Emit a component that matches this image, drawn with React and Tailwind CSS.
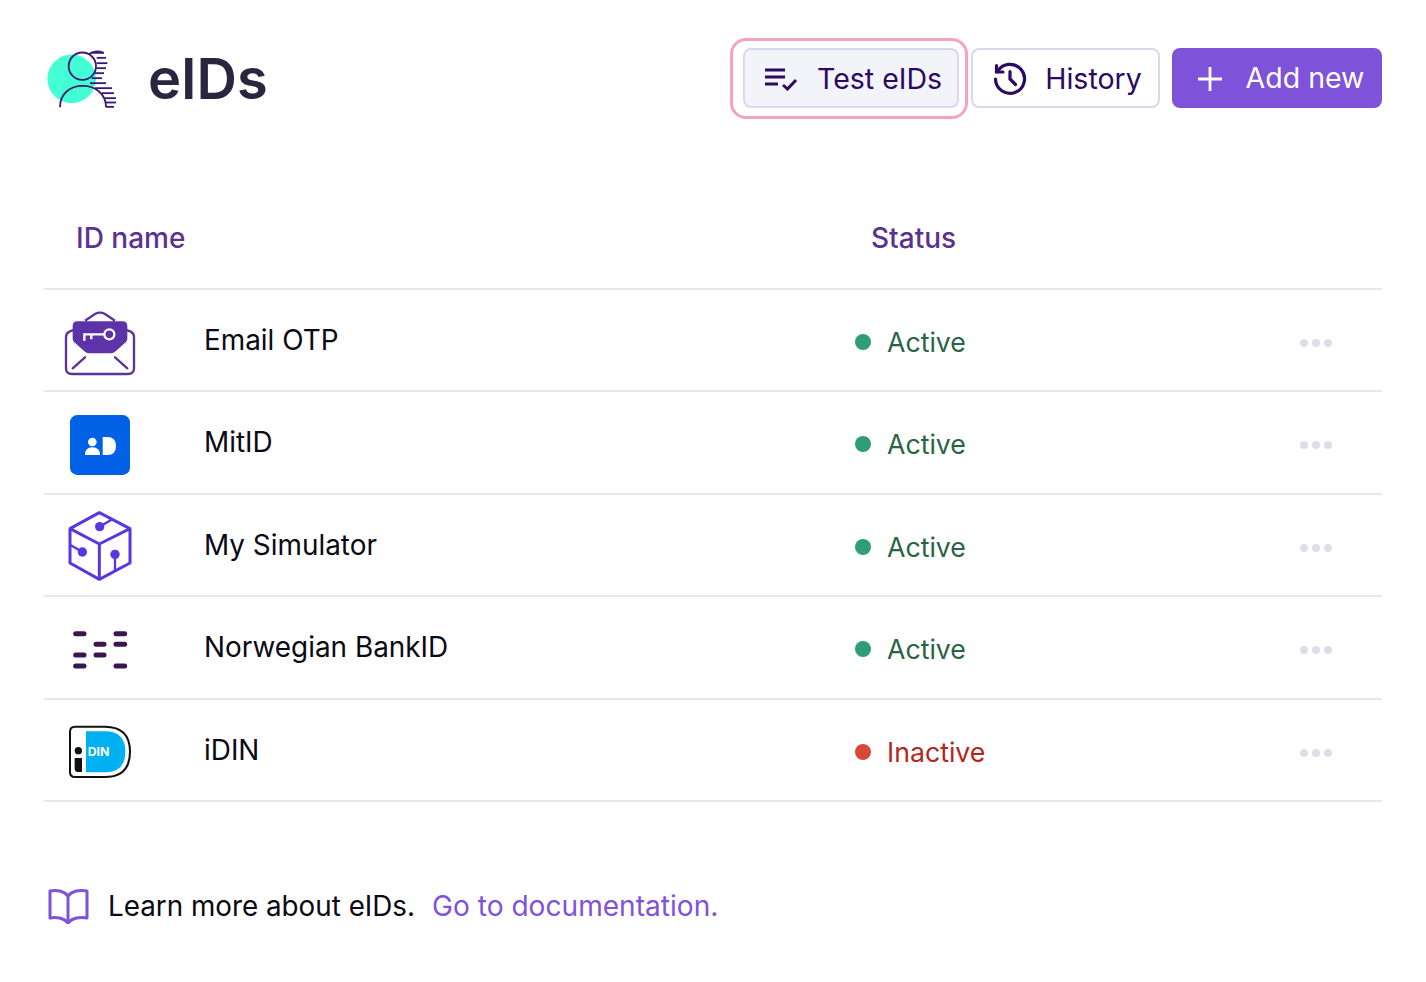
import React from "react";

const F = { fontFamily: "Inter, 'Liberation Sans', sans-serif" };

function Logo() {
  const stripes = [[185,222,67],[200,228,82],[200,232,98],[200,228,113],[195,222,128],[185,216,143],[180,228,158],[195,246,173],[215,252,188],[225,258,203],[228,258,216],[228,252,229]];
  return (
    <svg width="80" height="70" viewBox="42 40.500 240 210" className="shrink-0">
      <circle cx="125" cy="145" r="73" fill="#44ffd4" />
      <circle cx="157" cy="107" r="41" fill="none" stroke="#3b1a75" strokeWidth="5.500" />
      <path d="M90 230C90 190 120 166 158 166C196 166 228 190 228 230" fill="none" stroke="#3b1a75" strokeWidth="5.500" />
      <path d="M176 72C185 62 205 60 220 67" fill="none" stroke="#3b1a75" strokeWidth="5.500" />
      {stripes.map(([a, b, y]) => <path key={y} d={`M${a} ${y}H${b}`} stroke="#3b1a75" strokeWidth="5.500" />)}
    </svg>
  );
}

function EmailIcon() {
  return (
    <svg width="100" height="100" viewBox="0 -30 300 300">
      <path d="M70 90L58 95Q48 100 48 112V205Q48 222 66 222H234Q252 222 252 205V112Q252 100 242 95L230 90" fill="none" stroke="#5c3398" strokeWidth="7" />
      <path d="M105 62L135 42Q150 34 165 42L195 62" fill="none" stroke="#5c3398" strokeWidth="7" />
      <path d="M68 78Q68 64 82 64H218Q232 64 232 78V116Q232 122 227 127L197 154Q191 160 183 160H117Q109 160 103 154L73 127Q68 122 68 116Z" fill="#5c33a8" />
      <circle cx="178" cy="103" r="15" fill="none" stroke="#fff" strokeWidth="7" />
      <path d="M163 103H103V122M124 103V118" fill="none" stroke="#fff" strokeWidth="7" />
      <path d="M68 205L105 172M195 172L232 205" stroke="#5c3398" strokeWidth="7" strokeLinecap="round" />
    </svg>
  );
}

function MitIcon() {
  return (
    <svg width="100" height="102" viewBox="0 -27 300 306">
      <rect x="60" y="345" width="180" height="180" rx="22" fill="#0060e6" transform="translate(0 -300)" />
      <g transform="translate(0 -300)">
        <circle cx="127" cy="426" r="13" fill="#fff" />
        <path d="M105 465Q105 442 127 442Q150 442 150 465Z" fill="#fff" />
        <path d="M158 411H172Q198 411 198 438Q198 465 172 465H158Z" fill="#fff" />
      </g>
    </svg>
  );
}

function DiceIcon() {
  const c = "#5a36e0";
  return (
    <svg width="100" height="102" viewBox="0 -18 300 306">
      <path d="M148 38L240 86V189L148 238L60 189V86Z" fill="none" stroke={c} strokeWidth="9" strokeLinejoin="round" />
      <path d="M60 86L148 132L240 86M148 132V238" fill="none" stroke={c} strokeWidth="9" strokeLinejoin="round" />
      <circle cx="149" cy="80" r="14" fill={c} />
      <path d="M149 80L188 57" stroke={c} strokeWidth="7" />
      <circle cx="97" cy="156" r="14" fill={c} />
      <path d="M97 156L60 134" stroke={c} strokeWidth="7" />
      <circle cx="195" cy="163" r="14" fill={c} />
      <path d="M195 163V210" stroke={c} strokeWidth="7" />
    </svg>
  );
}

function BankIcon() {
  const bars = [[70,109,401],[191,231,401],[131,169,433],[191,231,433],[70,109,465],[131,169,465],[70,109,498],[191,231,498]];
  return (
    <svg width="100" height="102" viewBox="0 288 300 306">
      {bars.map(([a, b, y]) => (
        <path key={`${a}-${y}`} d={`M${a + 7} ${y}H${b - 7}`} stroke="#3a1650" strokeWidth="15" strokeLinecap="round" />
      ))}
    </svg>
  );
}

function IdinIcon() {
  return (
    <svg width="100" height="102" viewBox="0 -33 300 306" style={{ fontFamily: "Inter, sans-serif" }}>
      <path d="M75 50H165Q240 50 240 125Q240 201 165 201H75Q60 201 60 186V65Q60 50 75 50Z" fill="#fff" stroke="#111" strokeWidth="6" />
      <path d="M108 64H165Q226 64 226 125Q226 187 165 187H108Z" fill="#00b0f0" />
      <circle cx="85" cy="122" r="11" fill="#111" />
      <path d="M74 144H96V186H86Q74 186 74 176Z" fill="#111" />
      <text x="113" y="138" fill="#fff" fontSize="37" fontWeight="700">DIN</text>
    </svg>
  );
}

function Dots() {
  return (
    <div className="flex gap-[4px] pt-[6px]">
      <span className="w-[8px] h-[8px] rounded-full bg-[#e0dcea]" />
      <span className="w-[8px] h-[8px] rounded-full bg-[#e0dcea]" />
      <span className="w-[8px] h-[8px] rounded-full bg-[#e0dcea]" />
    </div>
  );
}

function Row({ icon, name, active, h }) {
  return (
    <div className={`flex items-center border-b-2 border-[#e9e6f4] ${h}`}>
      <div className="w-[160px] shrink-0 pl-[6px]">
        <div className="w-[100px]">{icon}</div>
      </div>
      <div className="w-[651px] shrink-0 text-[27.9px] leading-[40px] text-[#0a0a14]">{name}</div>
      <div className="flex items-center gap-[16px] flex-1 pt-[4px]">
        <span className={`w-[16px] h-[16px] rounded-full ${active ? "bg-[#2f9e77]" : "bg-[#d6493a]"}`} />
        <span className={`text-[26.7px] leading-[40px] ${active ? "text-[#2a6445]" : "text-[#b3261e]"}`}>{active ? "Active" : "Inactive"}</span>
      </div>
      <div className="pr-[50px]"><Dots /></div>
    </div>
  );
}

export default function App() {
  return (
    <div className="w-[1426px] h-[982px] bg-white pl-[44px] pr-[44px] pt-[38px]" style={F}>
      <header className="flex items-center justify-between h-[81px]">
        <div className="flex items-center gap-[24px]">
          <Logo />
          <h1 className="text-[56px] leading-[64px] font-semibold text-[#2a2640]">eIDs</h1>
        </div>
        <div className="flex items-start gap-[12px]">
          <div className="rounded-[16px] border-[3px] border-[#f5a3c0] pl-[10px] pr-[6px] pt-[7px] pb-[8px]">
            <button className="h-[60px] w-[216px] flex items-center justify-center gap-[19px] rounded-[8px] border-2 border-[#dcd6ee] bg-[#f3f3fa] pl-[4px] pt-[2px] text-[28.5px] text-[#2a0a63]">
              <svg width="34" height="24" viewBox="0 0 34 24" fill="none" stroke="#2a0a63" strokeWidth="3.200">
                <path d="M1 3H21M1 10H21M1 17H14" />
                <path d="M19 18L23.500 22L32 13" strokeWidth="3" />
              </svg>
              Test eIDs
            </button>
          </div>
          <button className="mt-[10px] h-[60px] w-[189px] flex items-center justify-center gap-[18px] rounded-[8px] border-2 border-[#dcd6ee] bg-white pl-[4px] pt-[2px] text-[28.5px] text-[#2a0a63] ml-[-9px]">
            <svg width="34" height="34" viewBox="0 0 34 34" fill="none" stroke="#2a0a63" strokeWidth="3.200" strokeLinecap="round">
              <path d="M4.500 9.500A14.500 14.500 0 1 1 2.500 17" />
              <path d="M3.500 3.500V10H10" />
              <path d="M17 9.500V17L22.500 22.500" />
            </svg>
            History
          </button>
          <button className="mt-[10px] h-[60px] w-[210px] flex items-center justify-center gap-[22px] rounded-[8px] bg-[#7f52da] pl-[6px] pt-[1px] text-[28.5px] text-white">
            <svg width="28" height="28" viewBox="0 0 28 28" stroke="#fff" strokeWidth="2.800"><path d="M14 2V26M2 14H26" /></svg>
            Add new
          </button>
        </div>
      </header>

      <div className="mt-[71px] flex items-center h-[100px] border-b-2 border-[#e9e6f4] text-[28px] font-medium text-[#5a3390] pb-[2px]">
        <div className="w-[827px] pl-[32px] shrink-0">ID name</div>
        <div>Status</div>
      </div>
      <Row h="h-[101.5px]" icon={<EmailIcon />} name="Email OTP" active />
      <Row h="h-[103px]" icon={<MitIcon />} name="MitID" active />
      <Row h="h-[102.5px]" icon={<DiceIcon />} name="My Simulator" active />
      <Row h="h-[102.5px]" icon={<BankIcon />} name="Norwegian BankID" active />
      <Row h="h-[102.5px]" icon={<IdinIcon />} name="iDIN" />

      <div className="flex items-center mt-[84px] text-[27.8px] leading-[40px]">
        <svg width="44" height="36" viewBox="0 0 44 36" fill="none" stroke="#7f52da" strokeWidth="3" strokeLinejoin="round" className="mr-[18px] ml-[2px]">
          <path d="M22 8C18 3 10 1.500 4 3V30C10 28.500 18 30 22 35C26 30 34 28.500 41 30V3C34 1.500 26 3 22 8Z" />
          <path d="M22 8V35" />
        </svg>
        <span className="text-[#0a0a14]">Learn more about eIDs.</span>
        <span className="ml-[17px] text-[28.1px] text-[#7f52da]">Go to documentation.</span>
      </div>
    </div>
  );
}
